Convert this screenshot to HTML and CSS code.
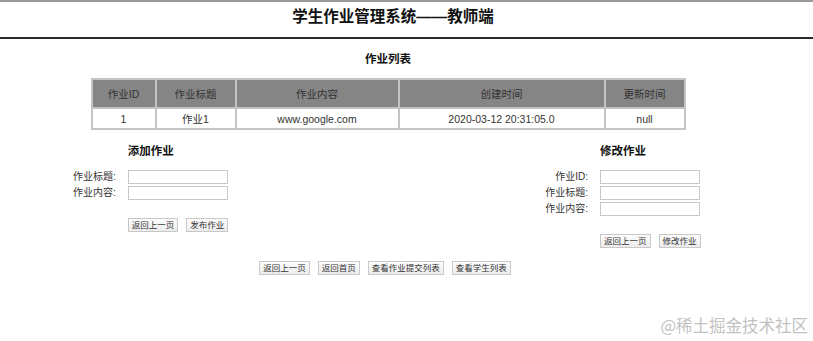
FILE: index.html
```html
<!DOCTYPE html>
<html lang="zh-CN">
<head>
    <meta charset="UTF-8">
    <meta name="viewport" content="width=device-width, initial-scale=1.0">
    <title>学生作业管理系统——教师端</title>
    <link rel="stylesheet" href="styles.css">
</head>
<body>
    <header class="top">
        <h1>学生作业管理系统——教师端</h1>
    </header>
    <main class="page">
        <h2 class="list-title">作业列表</h2>
        <table class="hw-table">
            <thead>
                <tr>
                    <th class="c-id">作业ID</th>
                    <th class="c-title">作业标题</th>
                    <th class="c-content">作业内容</th>
                    <th class="c-created">创建时间</th>
                    <th class="c-updated">更新时间</th>
                </tr>
            </thead>
            <tbody>
                <tr>
                    <td>1</td>
                    <td>作业1</td>
                    <td>www.google.com</td>
                    <td>2020-03-12 20:31:05.0</td>
                    <td>null</td>
                </tr>
            </tbody>
        </table>
    </main>

    <div class="forms">
        <form class="hw-form">
            <h3>添加作业</h3>
            <label>作业标题:</label>
            <input type="text">
            <label>作业内容:</label>
            <input type="text">
            <div class="actions">
                <button type="button">返回上一页</button>
                <button type="button">发布作业</button>
            </div>
        </form>
        <form class="hw-form">
            <h3>修改作业</h3>
            <label>作业ID:</label>
            <input type="text">
            <label>作业标题:</label>
            <input type="text">
            <label>作业内容:</label>
            <input type="text">
            <div class="actions">
                <button type="button">返回上一页</button>
                <button type="button">修改作业</button>
            </div>
        </form>
    </div>

    <div class="links">
        <button type="button">返回上一页</button>
        <button type="button">返回首页</button>
        <button type="button">查看作业提交列表</button>
        <button type="button">查看学生列表</button>
    </div>

    <div class="watermark">@稀土掘金技术社区</div>
</body>
</html>
```

FILE: styles.css
```css
:root {
    --dark: #2b2b2b;
    --grey: #858585;
    --line: #c4c4c4;
    --text: #333333;
}

body {
    font-family: "Liberation Sans", "Noto Sans CJK SC", sans-serif;
    margin: 0;
    padding: 0;
    background-color: #ffffff;
    color: #000000;
    height: 341px;
    overflow: hidden;
    position: relative;
}

.top {
    border-top: 2px solid #9a9a9a;
    border-bottom: 2px solid var(--dark);
    padding-bottom: 5px;
}

.top h1 {
    margin: 0;
    width: 776px;
    padding-left: 10px;
    box-sizing: border-box;
    text-align: center;
    font-size: 15.5px;
    line-height: 30px;
    color: #111;
}

.page {
    width: 776px;
}

.list-title {
    margin: 12px 0 11px;
    text-align: center;
    font-size: 11.5px;
    line-height: 16px;
    color: #111;
}

.hw-table {
    width: 595px;
    margin: 0 auto;
    border-collapse: collapse;
    border: 2px solid var(--line);
    font-size: 10.5px;
}

.hw-table th,
.hw-table td {
    border: 2px solid var(--line);
    padding: 0;
    text-align: center;
    color: var(--text);
}

.hw-table th {
    background-color: var(--grey);
    font-weight: normal;
    height: 27px;
}

.hw-table td {
    height: 19px;
}

.c-id { width: 62px; }
.c-title { width: 78px; }
.c-content { width: 161px; }
.c-created { width: 204px; }

.forms {
    display: flex;
    justify-content: space-between;
    align-items: flex-start;
    margin: 13px 113px 0 73px;
}

.hw-form {
    display: grid;
    grid-template-columns: auto 100px;
    column-gap: 12px;
    row-gap: 2px;
    align-items: center;
    margin: 0;
}

.hw-form h3 {
    grid-column: 2;
    margin: 0 0 9px;
    font-size: 11.5px;
    line-height: 16px;
    color: #111;
}

.hw-form label {
    grid-column: 1;
    text-align: right;
    font-size: 10px;
    line-height: 14px;
    color: var(--text);
}

.hw-form input {
    grid-column: 2;
    width: 100px;
    height: 14px;
    box-sizing: border-box;
    margin: 0;
    padding: 0 2px;
    border: 1px solid #c8c8c8;
    font-size: 10px;
}

.hw-form .actions {
    grid-column: 2;
    display: flex;
    gap: 8px;
    width: max-content;
    margin-top: 16px;
}

button {
    font-family: "Liberation Sans", "Noto Sans CJK SC", sans-serif;
    font-size: 8.5px;
    line-height: 12px;
    height: 14px;
    padding: 0 3px;
    margin: 0;
    border: 1px solid #c8c8c8;
    background: linear-gradient(#fdfdfd, #ececec);
    color: var(--text);
    white-space: nowrap;
    flex-shrink: 0;
}

.links {
    width: 770px;
    display: flex;
    justify-content: center;
    gap: 8px;
    margin-top: 13px;
}

.watermark {
    position: absolute;
    right: 5px;
    bottom: 6px;
    font-family: "Noto Sans CJK SC", sans-serif;
    font-size: 16.5px;
    line-height: 20px;
    color: #c2c2c2;
}
```
